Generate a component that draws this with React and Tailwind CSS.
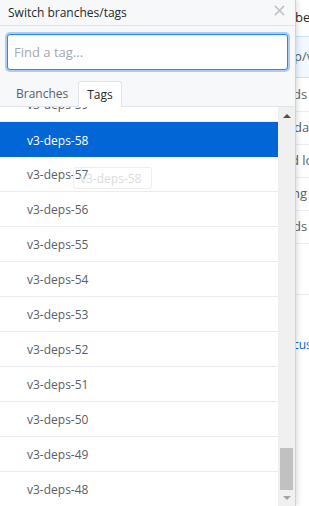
import { useState } from "react";

const tags = [59, 58, 57, 56, 55, 54, 53, 52, 51, 50, 49, 48, 47];

export default function App() {
    const [selected] = useState(58);

    return (
        <div className="relative flex w-[309px] h-[506px] overflow-hidden bg-white font-['Open_Sans','Noto_Sans',sans-serif]">
            <div className="relative z-10 flex flex-col w-[296px] shrink-0 bg-white border-r border-[#cfd3d7] shadow-[2px_0_5px_rgba(0,0,0,0.12)]">
                <div className="flex items-center justify-between h-[26px] shrink-0 pl-[8px] pr-[10px] bg-[#f6f8fa] border-b border-[#e1e4e8]">
                    <span className="text-[12px] text-[#24292e]">Switch branches/tags</span>
                    <svg width="11" height="11" viewBox="0 0 12 12" className="mb-[4px]">
                        <path d="M1 1L11 11M11 1L1 11" stroke="#c4c4c4" strokeWidth="1.8" />
                    </svg>
                </div>

                <div className="bg-[#f6f8fa] pt-[8px] px-[7px] pb-[11px] shrink-0">
                    <input
                        type="text"
                        placeholder="Find a tag..."
                        className="w-full h-[36px] px-[6px] text-[13px] bg-white rounded-[3px] border border-[#2188ff] shadow-[0_0_0_2px_rgba(3,102,214,0.3)] outline-none placeholder:text-[#a4a8ad]"
                    />
                </div>

                <div className="flex items-end h-[26px] pl-[8px] bg-[#f6f8fa] border-b border-[#e1e4e8] shrink-0">
                    <div className="h-[25px] px-[8px] pt-[1px] flex items-center text-[12px] text-[#586069]">Branches</div>
                    <div className="h-[26px] -mb-px ml-[2px] px-[8px] pt-[1px] flex items-center text-[12px] text-[#24292e] bg-white border border-b-0 border-[#e1e4e8] rounded-t-[3px]">Tags</div>
                </div>

                <div className="flex flex-1 min-h-0">
                    <div className="flex-1 overflow-hidden">
                        <div className="-mt-[20px]">
                            {tags.map((t) => (
                                <div
                                    key={t}
                                    className={
                                        t === selected
                                            ? "h-[35px] flex items-center pl-[27px] pt-[2px] text-[12px] bg-[#0366d6] text-white"
                                            : "h-[35px] flex items-center pl-[27px] pt-[2px] text-[12px] text-[#586069] border-b border-[#eaecef]"
                                    }
                                >
                                    v3-deps-{t}
                                </div>
                            ))}
                        </div>
                    </div>
                    <div className="w-[17px] flex flex-col bg-[#f0f0f0]">
                        <div className="h-[17px] flex items-center justify-center">
                            <svg width="8" height="4" viewBox="0 0 8 4"><path d="M0 4L4 0L8 4Z" fill="#505050" /></svg>
                        </div>
                        <div className="flex-1 flex flex-col justify-end px-[2px]">
                            <div className="h-[42px] bg-[#c1c1c1]" />
                        </div>
                        <div className="h-[16px] flex items-center justify-center">
                            <svg width="8" height="4" viewBox="0 0 8 4"><path d="M0 0L8 0L4 4Z" fill="#a3a3a3" /></svg>
                        </div>
                    </div>
                </div>
            </div>

            <div className="flex-1 overflow-hidden flex flex-col text-[13px] text-[#586069] whitespace-nowrap">
                <div className="h-[36px] shrink-0 flex items-center text-[#24292e]"><span className="-ml-[1px]">be</span></div>
                <div className="h-[42px] shrink-0 flex items-center bg-[#f1f8ff] border-y border-[#c8e1ff]"><span className="-ml-[2px]">p/v</span></div>
                <div className="h-[34px] shrink-0 flex items-center border-b border-[#eaecef]"><span className="-ml-[3px]">ds</span></div>
                <div className="h-[33px] shrink-0 flex items-center border-b border-[#eaecef]"><span className="-ml-[2px]">dat</span></div>
                <div className="h-[33px] shrink-0 flex items-center border-b border-[#eaecef]"><span className="-ml-[5px]">d lo</span></div>
                <div className="h-[33px] shrink-0 flex items-center border-b border-[#eaecef]"><span className="-ml-[4px]">ng</span></div>
                <div className="h-[33px] shrink-0 flex items-center border-b border-[#eaecef]"><span className="-ml-[3px]">ds</span></div>
                <div className="h-[51px] shrink-0 border-b border-[#eaecef]" />
                <div className="h-[100px] shrink-0 flex items-center text-[#0366d6] text-[12px]"><span className="-ml-[3px]">cus</span></div>
            </div>

            <div className="absolute left-[73px] top-[167px] z-20 w-[79px] h-[22px] flex items-center pl-[6px] pt-[1px] border border-[#eeeeee] rounded-[3px] text-[12px] text-[#dcdcdc]">
                v3-deps-58
            </div>
        </div>
    );
}
